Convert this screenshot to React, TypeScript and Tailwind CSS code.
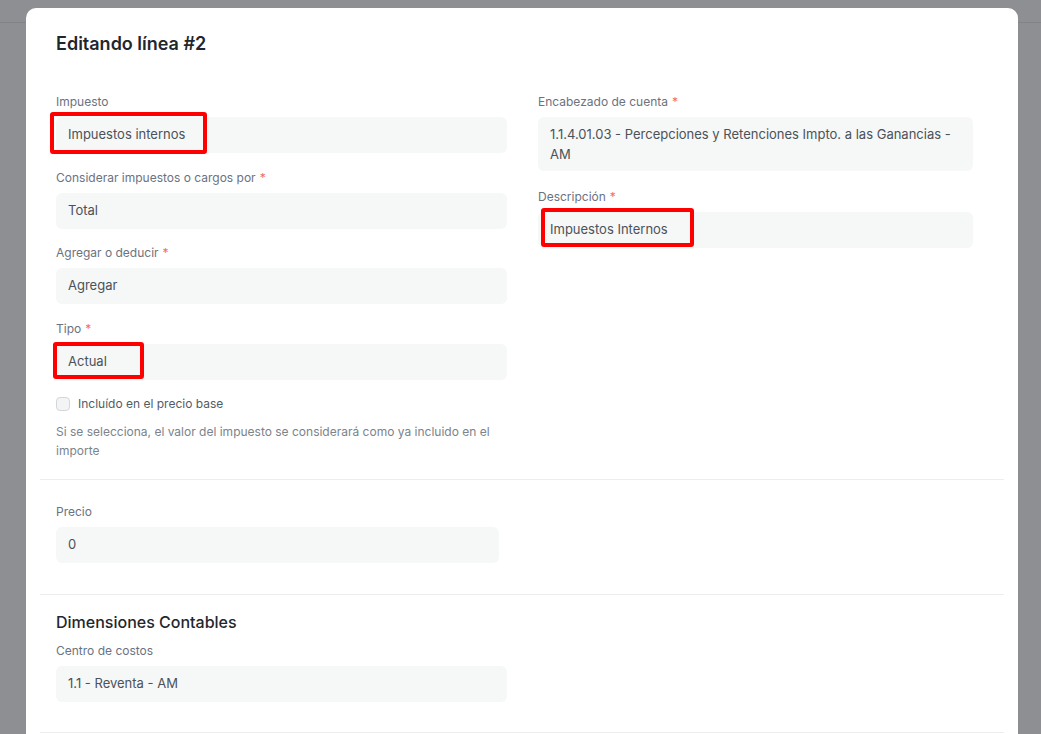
import React from "react";

type FieldProps = {
  label: string;
  value: string;
  required?: boolean;
  width?: string;
  multiline?: boolean;
  className?: string;
  mark?: string;
};

function Field({ label, value, required, width = "w-full", multiline, className = "", mark }: FieldProps) {
  return (
    <div className={className}>
      <div className="h-4 text-[12px] leading-4 text-[#6b7280] mb-[7px] whitespace-nowrap">
        {label}
        {required && <span className="text-[#f26b6b] ml-1">*</span>}
      </div>
      <div
        className={`relative ${width} rounded-[6px] bg-[#f6f7f7] px-3 text-[13px] text-[#4b5258] ${
          multiline ? "py-[7px] leading-5" : "h-9 flex items-center"
        }`}
      >
        {value}
        {mark && <div className={`absolute border-4 border-[#ff0000] rounded-[3px] ${mark}`} />}
      </div>
    </div>
  );
}

export default function App() {
  return (
    <div className="relative h-[734px] overflow-hidden bg-[#8d8f92] font-['Inter','Noto_Sans',sans-serif]">
      {/* page behind the dialog */}
      <div className="h-[23px] border-b border-[#818386]" />

      <div className="absolute left-[26px] top-2 w-[992px] h-[760px] bg-white rounded-[10px]">
        <div className="pt-6 pl-[30px] h-12 text-[18px] leading-6 font-semibold text-[#1f272e]">
          Editando línea #2
        </div>

        <div className="px-[14px]">
          {/* main section */}
          <div className="flex px-4 pt-[38px] pb-[19.5px] border-b border-[#ededed]">
            <div className="w-[451px]">
              <Field
                label="Impuesto"
                value="Impuestos internos"
                className="mb-[16.5px]"
                mark="-left-[6px] -top-[5px] w-[157px] h-[42px]"
              />
              <Field label="Considerar impuestos o cargos por" value="Total" required className="mb-[16.5px]" />
              <Field label="Agregar o deducir" value="Agregar" required className="mb-[16.5px]" />
              <Field
                label="Tipo"
                value="Actual"
                required
                className="mb-[14.5px]"
                mark="-left-[3px] -top-[1.5px] w-[91px] h-[37px]"
              />
              <div className="flex items-center h-5">
                <div className="w-[14px] h-[14px] rounded-[4px] border border-[#d4d7da] bg-[#f3f4f5]" />
                <span className="ml-2 text-[12px] text-[#525c65]">Incluído en el precio base</span>
              </div>
              <p className="mt-[7.5px] text-[12px] leading-[19px] text-[#7b838b]">
                Si se selecciona, el valor del impuesto se considerará como ya incluido en el importe
              </p>
            </div>

            <div className="ml-[31px] w-[435px]">
              <Field
                label="Encabezado de cuenta"
                value="1.1.4.01.03 - Percepciones y Retenciones Impto. a las Ganancias - AM"
                required
                multiline
                className="mb-[18px]"
              />
              <Field
                label="Descripción"
                value="Impuestos Internos"
                required
                mark="left-[3px] -top-[4px] w-[153px] h-[39px]"
              />
            </div>
          </div>

          {/* precio */}
          <div className="px-4 pt-6 pb-[31px] border-b border-[#ededed]">
            <Field label="Precio" value="0" width="w-[443px]" />
          </div>

          {/* dimensiones */}
          <div className="px-4 pt-[17px] pb-[30px] border-b border-[#ededed]">
            <div className="h-5 text-[16px] leading-5 font-medium text-[#1f272e] mb-[11px]">
              Dimensiones Contables
            </div>
            <Field label="Centro de costos" value="1.1 - Reventa - AM" width="w-[451px]" />
          </div>
        </div>
      </div>
    </div>
  );
}
